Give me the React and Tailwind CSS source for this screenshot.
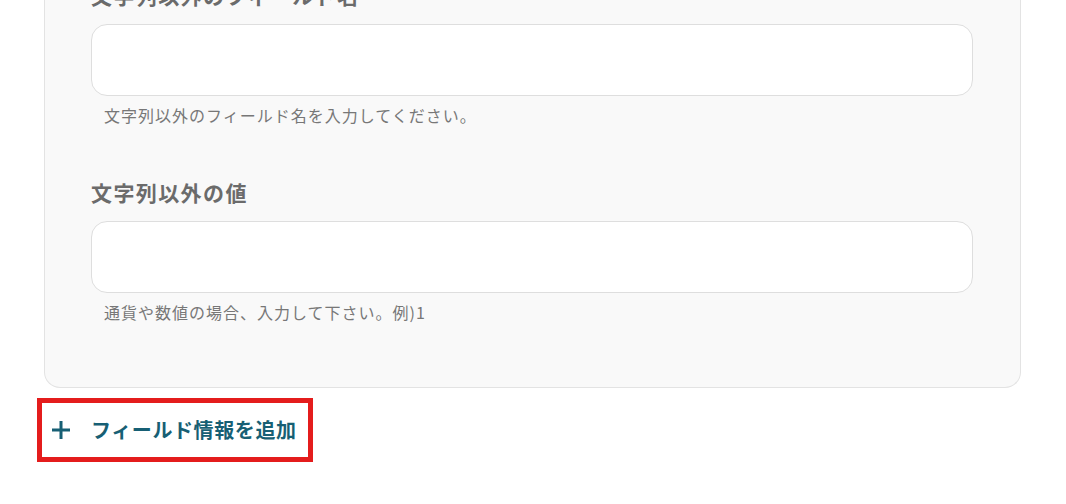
import React from 'react';

const fieldFont = { fontFamily: '"Noto Sans CJK JP", "Noto Sans", sans-serif' };

const Field = ({ label, hint, className = '' }) => (
    <div className={`flex flex-col ${className}`}>
        <label className="text-[21px] font-bold leading-[28px] tracking-[1.4px] text-[#6b6b6b]">
            {label}
        </label>
        <input
            type="text"
            className="mt-[15px] h-[72px] w-full rounded-[16px] border border-[#dedede] bg-white px-4 outline-none"
        />
        <p className="mt-[8px] pl-[13px] text-[16px] leading-[22px] tracking-[1px] text-[#777777]">
            {hint}
        </p>
    </div>
);

export default function App() {
    return (
        <div className="h-[504px] w-[1066px] overflow-hidden bg-white" style={fieldFont}>
            <div className="-mt-[19px] ml-[44px] w-[977px]">
                <div className="rounded-b-[16px] border border-t-0 border-[#e3e3e3] bg-[#f9f9f9] pb-[64px] pl-[46px] pr-[47px]">
                    <Field
                        label="文字列以外のフィールド名"
                        hint="文字列以外のフィールド名を入力してください。"
                    />
                    <Field
                        className="mt-[52px]"
                        label="文字列以外の値"
                        hint="通貨や数値の場合、入力して下さい。例)1"
                    />
                </div>
            </div>
            <div className="ml-[37px] mt-[10px] flex h-[64px] w-[276px] items-center border-[5px] border-[#e41c1c] bg-white">
                <button className="flex items-center text-[#175f74]">
                    <svg
                        className="ml-[9px] h-[20px] w-[20px]"
                        viewBox="0 0 20 20"
                        fill="none"
                        stroke="currentColor"
                        strokeWidth="3">
                        <path d="M10 1v18M1 10h18" />
                    </svg>
                    <span className="ml-[20px] text-[20px] font-bold tracking-[0.6px]">
                        フィールド情報を追加
                    </span>
                </button>
            </div>
        </div>
    );
}
